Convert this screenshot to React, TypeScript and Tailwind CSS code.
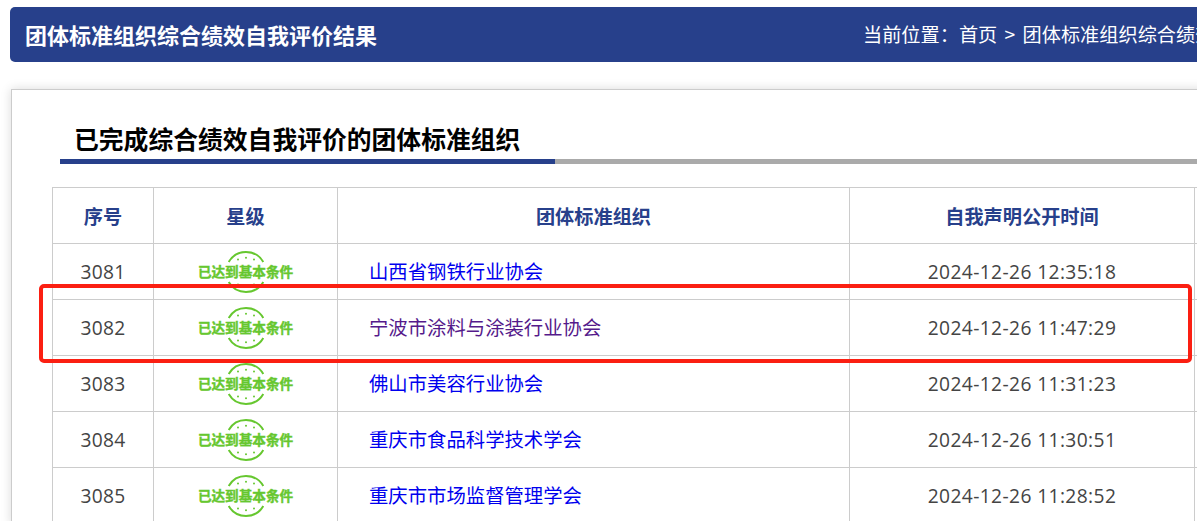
const rows = [
  { no: 3081, name: "山西省钢铁行业协会", time: "2024-12-26 12:35:18" },
  { no: 3082, name: "宁波市涂料与涂装行业协会", time: "2024-12-26 11:47:29", visited: true },
  { no: 3083, name: "佛山市美容行业协会", time: "2024-12-26 11:31:23" },
  { no: 3084, name: "重庆市食品科学技术学会", time: "2024-12-26 11:30:51" },
  { no: 3085, name: "重庆市市场监督管理学会", time: "2024-12-26 11:28:52" },
];

const Badge = () => (
  <div className="relative mx-auto h-[42px] w-[96px]">
    <svg className="absolute inset-0" width="96" height="42" viewBox="0 0 96 42" fill="none">
      <path d="M30.7 11 A20 20 0 0 1 65.3 11" stroke="#66c72f" strokeWidth="2" />
      <path d="M30.7 31 A20 20 0 0 0 65.3 31" stroke="#66c72f" strokeWidth="2" />
      <g fill="#66c72f">
        <circle cx="40" cy="8.5" r="1" />
        <circle cx="48" cy="6.7" r="1" />
        <circle cx="56" cy="8.5" r="1" />
        <circle cx="40" cy="33.5" r="1" />
        <circle cx="48" cy="35.3" r="1" />
        <circle cx="56" cy="33.5" r="1" />
      </g>
    </svg>
    <span className="absolute inset-0 flex items-center justify-center text-[13.6px] font-bold whitespace-nowrap text-[#66c72f] [-webkit-text-stroke:0.4px_#66c72f]">
      已达到基本条件
    </span>
  </div>
);

export default function App() {
  return (
    <div className="relative h-[521px] w-[1197px] overflow-hidden bg-white font-['Noto_Sans_CJK_SC',sans-serif]">
      <div className="ml-[10px] mt-[7px] flex h-[55px] w-[1300px] items-center justify-between rounded-[5px] bg-[#27408b] pl-[15px] text-white">
        <h1 className="text-[22px] font-bold">团体标准组织综合绩效自我评价结果</h1>
        <div className="w-[447px] whitespace-nowrap text-[19.2px] [word-spacing:3px]">当前位置：首页 &gt; 团体标准组织综合绩效自我评价结果</div>
      </div>

      <div className="ml-[11px] mt-[27px] w-[1300px] border border-[#ccc] bg-white pl-[48px] pt-[31px] shadow-[0_0_10px_rgba(0,0,0,0.15)]">
        <div className="border-b-[5px] border-[#aaa]">
          <h2 className="-mb-[5px] inline-block border-b-[5px] border-[#27408b] pb-[4px] pl-[14px] pr-[35px] text-[24.8px] leading-[34px] font-bold text-black">
            已完成综合绩效自我评价的团体标准组织
          </h2>
        </div>
        <table className="mt-[23px] -ml-[8px] w-[1300px] table-fixed border-collapse text-[19.2px] text-[#444]">
          <thead>
            <tr className="h-[56px] text-[#27408b]">
              <th className="w-[101px] border border-[#ccc] pt-[2px]">序号</th>
              <th className="w-[184px] border border-[#ccc] pt-[2px]">星级</th>
              <th className="w-[512px] border border-[#ccc] pt-[2px]">团体标准组织</th>
              <th className="w-[345px] border border-[#ccc] pt-[2px]">自我声明公开时间</th>
              <th className="border border-[#ccc]" />
            </tr>
          </thead>
          <tbody>
            {rows.map((r) => (
              <tr key={r.no} className="h-[56px]">
                <td className="border border-[#ccc] pt-[2px] text-center font-['Open_Sans',sans-serif] tracking-[0.3px]">{r.no}</td>
                <td className="border border-[#ccc]"><Badge /></td>
                <td className="border border-[#ccc] pl-[31px] text-[19.36px]">
                  <a href="#" className={r.visited ? "text-[#551a8b]" : "text-[#0000ee]"}>{r.name}</a>
                </td>
                <td className="border border-[#ccc] pt-[2px] text-center font-['Open_Sans',sans-serif] tracking-[0.4px]">{r.time}</td>
                <td className="border border-[#ccc]" />
              </tr>
            ))}
          </tbody>
        </table>
      </div>

      <div className="absolute left-[39px] top-[284px] h-[79px] w-[1153px] rounded-[5px] border-[4px] border-[#fb1f12]" />
    </div>
  );
}
